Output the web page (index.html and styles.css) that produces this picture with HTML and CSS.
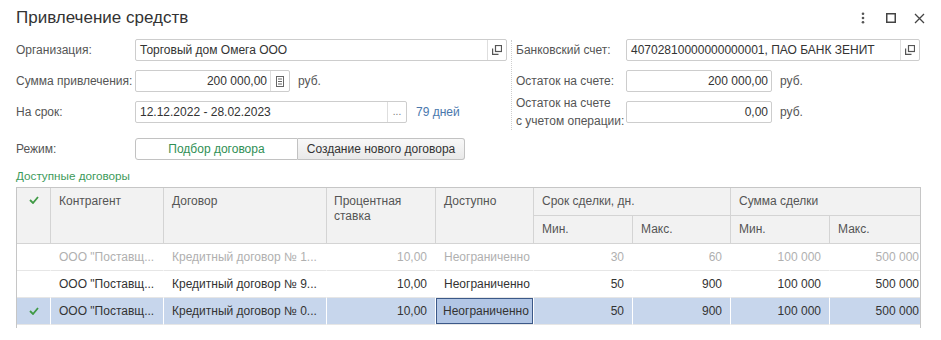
FILE: index.html
```html
<!DOCTYPE html>
<html lang="ru">
<head>
<meta charset="utf-8">
<title>Привлечение средств</title>
<link rel="stylesheet" href="styles.css">
</head>
<body>
<div class="window">
  <div class="titlebar">
    <h1 class="title">Привлечение средств</h1>
    <div class="win-actions">
      <span class="win-btn"><svg width="4" height="12" viewBox="0 0 4 12"><circle cx="2" cy="1.8" r="1.3" fill="#555"/><circle cx="2" cy="6" r="1.3" fill="#555"/><circle cx="2" cy="10.2" r="1.3" fill="#555"/></svg></span>
      <span class="win-btn"><svg width="10" height="10" viewBox="0 0 10 10"><rect x="0.75" y="0.75" width="8.5" height="8.5" fill="none" stroke="#444" stroke-width="1.5"/></svg></span>
      <span class="win-btn"><svg width="11" height="11" viewBox="0 0 11 11"><path d="M1 1 L10 10 M10 1 L1 10" stroke="#444" stroke-width="1.3" fill="none"/></svg></span>
    </div>
  </div>

  <div class="form">
    <span class="label">Организация:</span>
    <div class="field">
      <div class="input w-org"><span class="val">Торговый дом Омега ООО</span><span class="ibtn"><svg width="10" height="10" viewBox="0 0 10 10"><rect x="3.5" y="0.5" width="6" height="6" fill="none" stroke="#555" stroke-width="1.2"/><path d="M0.6 3.5 V9.4 H6.5" fill="none" stroke="#555" stroke-width="1.2"/></svg></span></div>
    </div>
    <div class="sep"></div>
    <span class="label">Банковский счет:</span>
    <div class="field">
      <div class="input w-acc"><span class="val">40702810000000000001, ПАО БАНК ЗЕНИТ</span><span class="ibtn"><svg width="10" height="10" viewBox="0 0 10 10"><rect x="3.5" y="0.5" width="6" height="6" fill="none" stroke="#555" stroke-width="1.2"/><path d="M0.6 3.5 V9.4 H6.5" fill="none" stroke="#555" stroke-width="1.2"/></svg></span></div>
    </div>

    <span class="label">Сумма привлечения:</span>
    <div class="field">
      <div class="input w-sum"><span class="val num">200 000,00</span><span class="ibtn"><svg width="8" height="11" viewBox="0 0 8 11"><rect x="0.5" y="0.5" width="7" height="10" fill="none" stroke="#666"/><path d="M2 3 H6 M2 5.5 H6 M2 8 H6" stroke="#666"/></svg></span></div>
      <span class="unit">руб.</span>
    </div>
    <span class="label">Остаток на счете:</span>
    <div class="field">
      <div class="input w-bal"><span class="val num">200 000,00</span></div>
      <span class="unit">руб.</span>
    </div>

    <span class="label">На срок:</span>
    <div class="field">
      <div class="input w-term"><span class="val">12.12.2022 - 28.02.2023</span><span class="ibtn dots">...</span></div>
      <span class="link">79 дней</span>
    </div>
    <span class="label two-line">Остаток на счете<br>с учетом операции:</span>
    <div class="field">
      <div class="input w-bal"><span class="val num">0,00</span></div>
      <span class="unit">руб.</span>
    </div>
  </div>

  <div class="mode-row">
    <span class="label">Режим:</span>
    <div class="seg">
      <span class="seg-btn active">Подбор договора</span>
      <span class="seg-btn">Создание нового договора</span>
    </div>
  </div>

  <div class="section-title">Доступные договоры</div>

  <div class="grid">
    <div class="th chk r2"><svg width="10" height="8" viewBox="0 0 10 8"><path d="M1 4 L4 7 L9 1" fill="none" stroke="#3f9a45" stroke-width="1.8"/></svg></div>
    <div class="th r2">Контрагент</div>
    <div class="th r2">Договор</div>
    <div class="th r2 wrap">Процентная ставка</div>
    <div class="th r2">Доступно</div>
    <div class="th c2">Срок сделки, дн.</div>
    <div class="th c2 last">Сумма сделки</div>
    <div class="th sub">Мин.</div>
    <div class="th sub">Макс.</div>
    <div class="th sub">Мин.</div>
    <div class="th sub last">Макс.</div>

    <div class="td dis"></div>
    <div class="td dis">ООО "Поставщ...</div>
    <div class="td dis">Кредитный договор № 1...</div>
    <div class="td dis num">10,00</div>
    <div class="td dis">Неограниченно</div>
    <div class="td dis num">30</div>
    <div class="td dis num">60</div>
    <div class="td dis num">100 000</div>
    <div class="td dis num last">500 000</div>

    <div class="td"></div>
    <div class="td">ООО "Поставщ...</div>
    <div class="td">Кредитный договор № 9...</div>
    <div class="td num">10,00</div>
    <div class="td">Неограниченно</div>
    <div class="td num">50</div>
    <div class="td num">900</div>
    <div class="td num">100 000</div>
    <div class="td num last">500 000</div>

    <div class="td sel chk"><svg width="10" height="8" viewBox="0 0 10 8"><path d="M1 4 L4 7 L9 1" fill="none" stroke="#3f9a45" stroke-width="1.8"/></svg></div>
    <div class="td sel">ООО "Поставщ...</div>
    <div class="td sel">Кредитный договор № 0...</div>
    <div class="td sel num">10,00</div>
    <div class="td sel focus">Неограниченно</div>
    <div class="td sel num">50</div>
    <div class="td sel num">900</div>
    <div class="td sel num">100 000</div>
    <div class="td sel num last">500 000</div>
  </div>
</div>
</body>
</html>
```

FILE: styles.css
```css
* { box-sizing: border-box; }
html, body { margin: 0; padding: 0; background: #fff; }
body {
  font-family: "Liberation Sans", Arial, sans-serif;
  font-size: 12px;
  color: #333;
}
.window { width: 941px; height: 340px; overflow: hidden; }

.titlebar {
  display: flex;
  align-items: center;
  height: 22px;
  margin-top: 7px;
  padding: 0 8px 0 16px;
}
.title {
  margin: 0;
  font-size: 17px;
  font-weight: normal;
  line-height: 22px;
  color: #333;
  flex: 1;
}
.win-actions { display: flex; }
.win-btn {
  width: 28px;
  height: 22px;
  display: flex;
  align-items: center;
  justify-content: center;
}

.form {
  display: grid;
  grid-template-columns: 119px 372px 9px 110px 294px;
  grid-template-rows: 22px 22px 22px;
  row-gap: 9px;
  align-items: center;
  margin-top: 10px;
  padding-left: 16px;
}
.label { color: #555; white-space: nowrap; }
.label.two-line { line-height: 18px; }
.sep {
  grid-column: 3;
  grid-row: 1 / 4;
  align-self: stretch;
  justify-self: center;
  width: 0;
  border-left: 1px dotted #cfcfcf;
  margin: 1px 0 -7px;
}
.field { display: flex; align-items: center; }
.input {
  height: 22px;
  border: 1px solid #cdcdcd;
  border-radius: 2px;
  background: #fff;
  display: flex;
  align-items: stretch;
}
.w-org { width: 372px; }
.w-acc { width: 294px; }
.w-sum { width: 155px; }
.w-bal { width: 146px; }
.w-term { width: 272px; }
.val {
  flex: 1;
  padding: 0 4px;
  line-height: 20px;
  white-space: nowrap;
  overflow: hidden;
  color: #333;
}
.val.num { text-align: right; padding-right: 3px; }
.ibtn {
  width: 19px;
  border-left: 1px solid #dedede;
  display: flex;
  align-items: center;
  justify-content: center;
}
.ibtn.dots { font-size: 10px; color: #777; line-height: 20px; align-items: flex-start; }
.unit { margin-left: 8px; color: #555; }
.link { margin-left: 9px; color: #4a78ad; }

.mode-row {
  display: flex;
  align-items: center;
  margin-top: 15px;
  padding-left: 16px;
}
.mode-row .label { width: 119px; }
.seg { display: flex; }
.seg-btn {
  height: 22px;
  line-height: 20px;
  text-align: center;
  border: 1px solid #c2c2c2;
  white-space: nowrap;
}
.seg-btn.active {
  width: 163px;
  background: #fff;
  color: #2f8f55;
  border-radius: 3px 0 0 3px;
}
.seg-btn:not(.active) {
  width: 167px;
  border-left: none;
  background: linear-gradient(#f8f8f8, #e9e9e9);
  color: #333;
  border-radius: 0 3px 3px 0;
}

.section-title {
  margin: 9px 0 0 16px;
  font-size: 11.7px;
  line-height: 14px;
  color: #3d9a5a;
}

.grid {
  margin: 4px 0 0 16px;
  width: 905px;
  height: 141px;
  border: 1px solid #c6c6c6;
  border-bottom: none;
  display: grid;
  grid-template-columns: 34px 113px 163px 109px 98px 99px 98px 99px 90px;
  grid-template-rows: 28px 28px 27px 27px 27px;
  align-content: start;
}
.th {
  background: #f2f2f2;
  color: #555;
  border-right: 1px solid #d4d4d4;
  border-bottom: 1px solid #d4d4d4;
  padding: 6px 8px 0;
  line-height: 15px;
  white-space: nowrap;
  overflow: hidden;
}
.th.wrap { white-space: normal; padding-left: 7px; }
.th.r2 { grid-row: span 2; }
.th.c2 { grid-column: span 2; }
.th.sub { padding-top: 0; display: flex; align-items: center; }
.th.chk { padding: 8px 0 0; display: flex; justify-content: center; align-items: flex-start; }
.th.last, .td.last { border-right: none; }

.td {
  display: flex;
  align-items: center;
  padding: 0 8px;
  border-right: 1px solid #fff;
  border-bottom: 1px solid #e6e6e6;
  white-space: nowrap;
  overflow: hidden;
  color: #333;
}
.td.num { justify-content: flex-end; }
.td.last { padding-right: 1px; }
.td.dis { color: #b0b0b0; }
.td.sel { background: #c7d6ec; }
.td.chk { justify-content: center; padding: 0; }
.td.focus {
  background: #b2c6e5;
  box-shadow: inset 0 0 0 1px #3b5888;
  padding-left: 7px;
}
```
